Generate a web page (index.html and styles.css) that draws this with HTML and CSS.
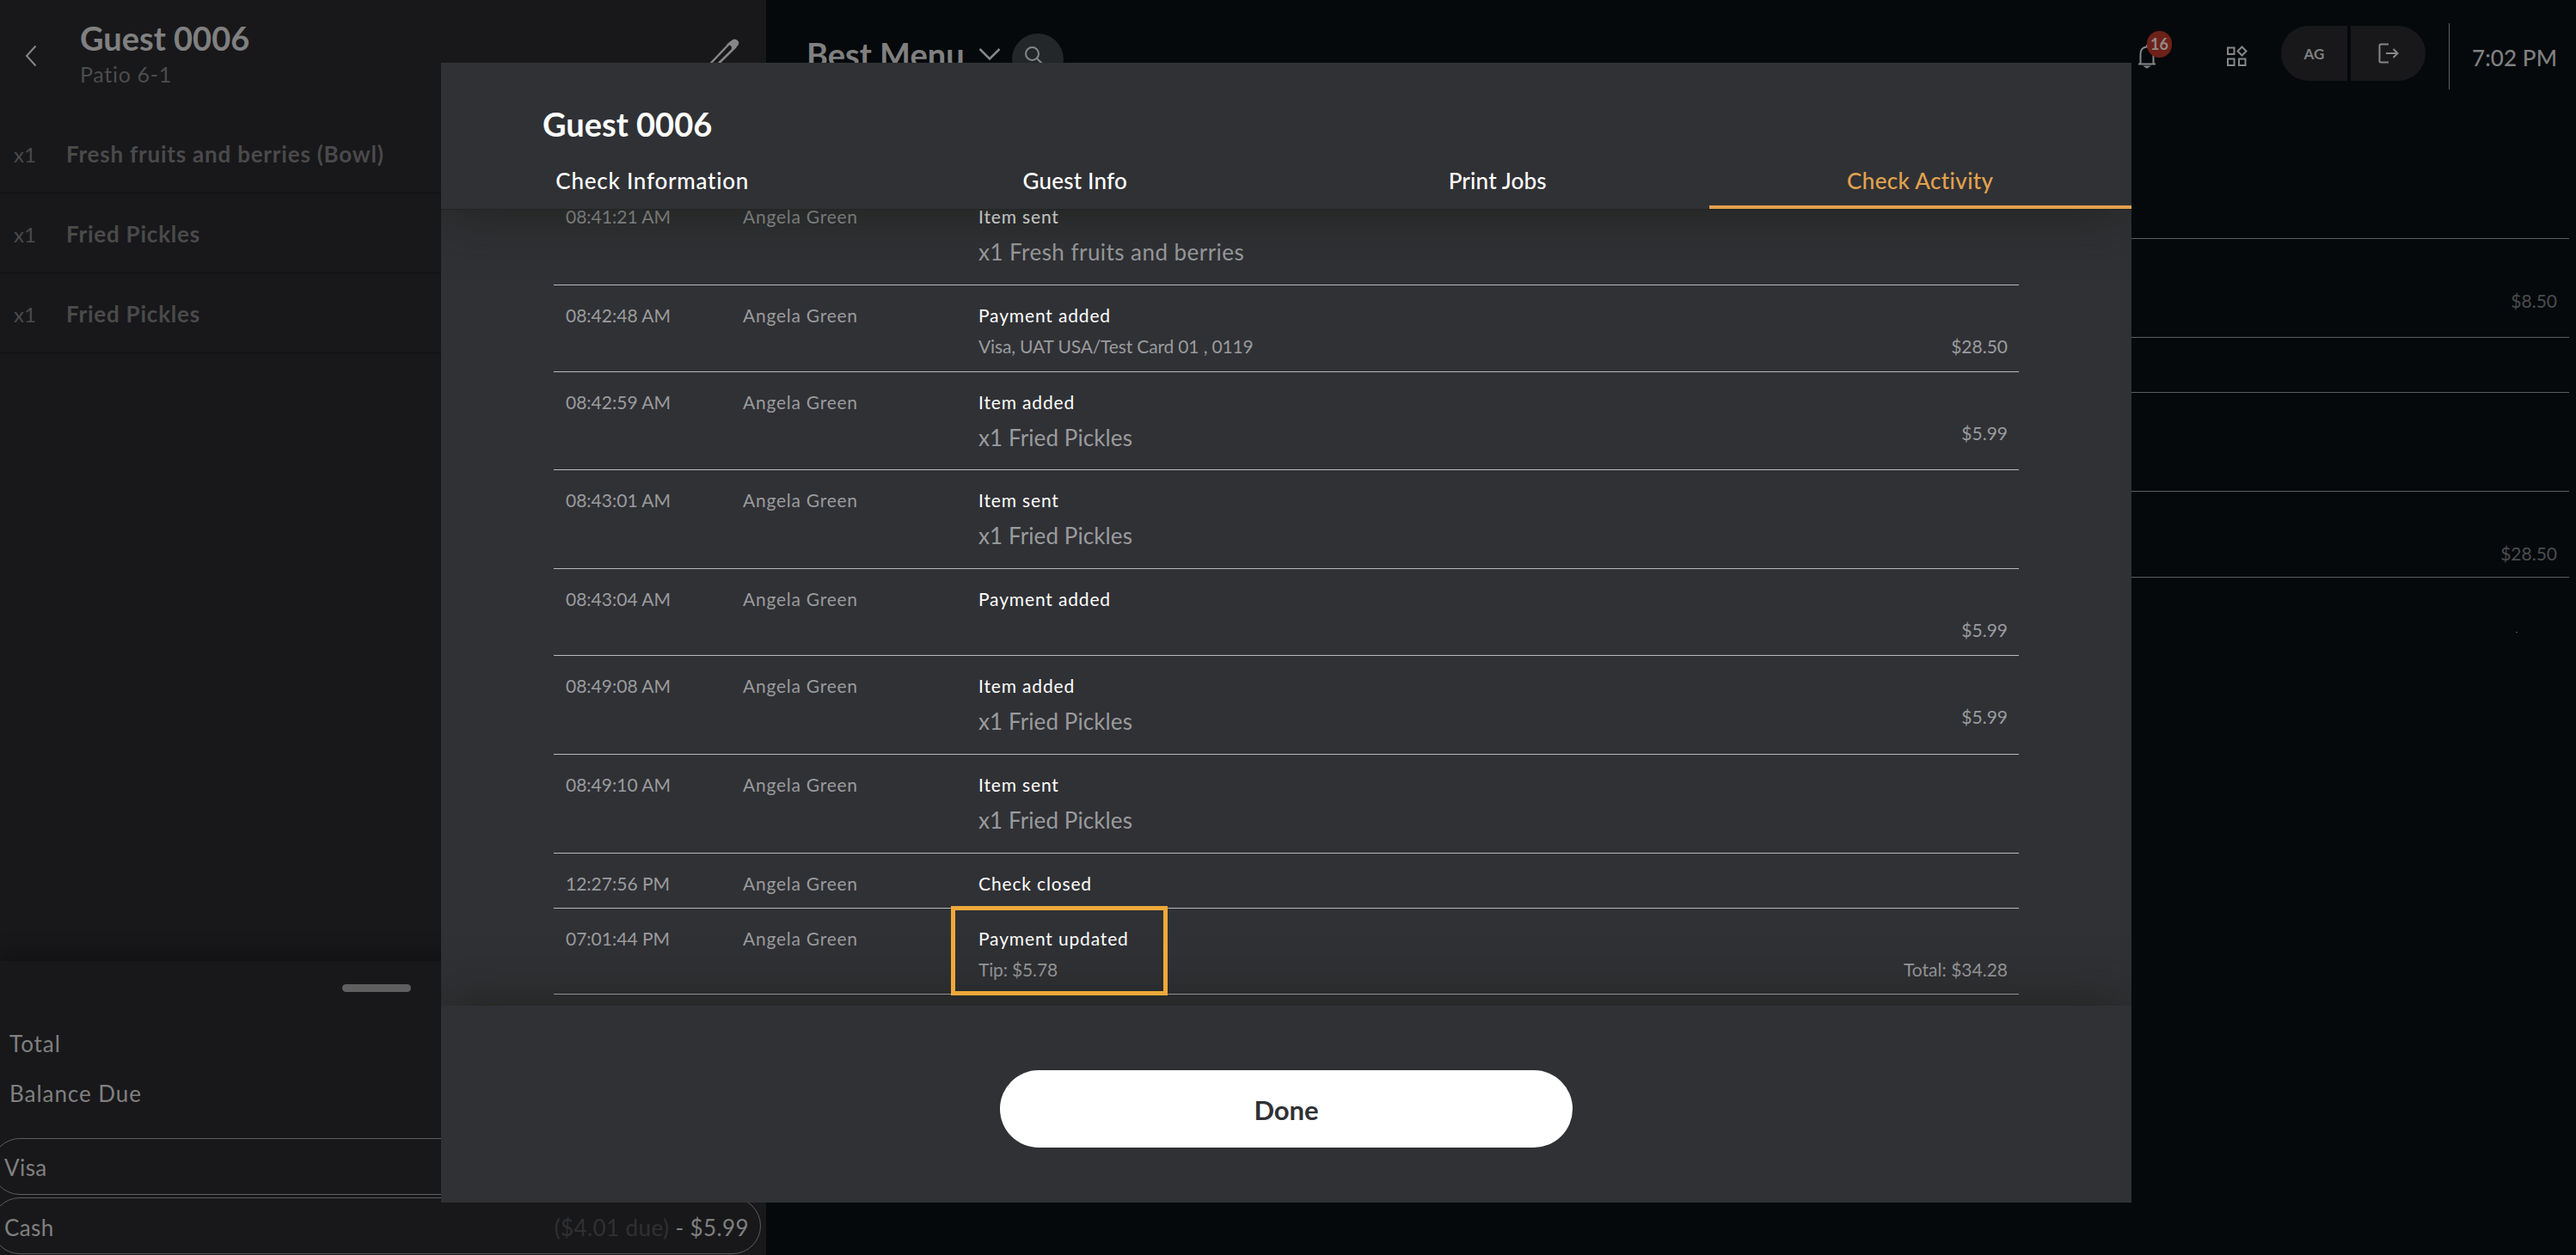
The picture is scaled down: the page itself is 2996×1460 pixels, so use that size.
FILE: index.html
```html
<!DOCTYPE html>
<html lang="en">
<head>
<meta charset="utf-8">
<title>Check Activity</title>
<link rel="stylesheet" href="styles.css">
</head>
<body>
<div class="app">
  <aside class="check">
    <header class="check-head">
      <svg class="back" width="14" height="26" viewBox="0 0 14 26"><path d="M12.500 1.500L2 13l10.500 11.500"/></svg>
      <div class="check-title">
        <div class="t-title">Guest 0006</div>
        <div class="t-table">Patio 6-1</div>
      </div>
      <svg class="pencil" width="38" height="38" viewBox="0 0 38 38"><path d="M0 32.500L27 4M9 32.500L33 9"/><path class="fill" d="M25 6l5-4q2-1 4 1t0 4.500L29 12q1-5-4-6z"/></svg>
    </header>
    <ul class="items">
      <li><span class="qty">x1</span><span class="name">Fresh fruits and berries (Bowl)</span></li>
      <li><span class="qty">x1</span><span class="name">Fried Pickles</span></li>
      <li><span class="qty">x1</span><span class="name">Fried Pickles</span></li>
    </ul>
    <section class="totals">
      <div class="handle"></div>
      <div class="sum">Total</div>
      <div class="sum">Balance Due</div>
      <div class="pay visa"><span>Visa</span></div>
      <div class="pay"><span>Cash</span><span class="paid"><span class="due">($4.01 due)</span> - $5.99</span></div>
    </section>
  </aside>
  <main class="menu">
    <header class="bar">
      <div class="menu-name">Best Menu</div>
      <svg class="caret" width="26" height="16" viewBox="0 0 26 16"><path d="M1.500 2L13 13.500 24.500 2"/></svg>
      <div class="search"><svg width="25" height="25" viewBox="0 0 25 25"><circle cx="9.500" cy="9.500" r="7.500"/><path d="M15 15l8.500 8.500"/></svg></div>
      <div class="bell">
        <svg width="20" height="28" viewBox="0 0 20 28"><path d="M0 22.500H20M2.500 22.500V11q0-8 7.500-8.500 7.500.5 7.500 8.500V22.500M10 2.500V0"/><path class="fill" d="M8.500 25.500h3l-1.500 1z"/></svg>
        <span class="badge">16</span>
      </div>
      <svg class="apps" width="24" height="24" viewBox="0 0 24 24"><path d="M1 2.500h7.500v7.500H1zM1 15.500h7.500V23H1zM14 15.500h7.500V23H14zM17.500 1.500l5 5-5 5-5-5z"/></svg>
      <div class="user"><span class="initials">AG</span><span class="logout"><svg width="24" height="24" viewBox="0 0 24 24"><path d="M12 1.500H3Q1.500 1.500 1.500 3V21Q1.500 22.500 3 22.500H12M9 12H22.500M17.500 7l5 5-5 5"/></svg></span></div>
      <div class="clock">7:02 PM</div>
    </header>
    <div class="log">
      <div class="log-row h115"><span>$8.50</span></div>
      <div class="log-row h64"></div>
      <div class="log-row h115"></div>
      <div class="log-row h100"><span>$28.50</span></div>
      <i class="speck"></i>
    </div>
  </main>
</div>

<div class="modal">
  <header class="modal-head">
    <h1>Guest 0006</h1>
    <nav class="tabs">
      <a class="tab wide">Check Information</a><a class="tab">Guest Info</a><a class="tab">Print Jobs</a><a class="tab active">Check Activity</a>
    </nav>
  </header>
  <div class="list">
    <div class="row h115 first"><span class="time">08:41:21 AM</span><span class="who">Angela Green</span><div class="what"><b>Item sent</b><p class="item long">x1 Fresh fruits and berries</p></div></div>
    <div class="row h101"><span class="time">08:42:48 AM</span><span class="who">Angela Green</span><div class="what"><b>Payment added</b><p class="note">Visa, UAT USA/Test Card 01 , 0119</p></div><span class="amt">$28.50</span></div>
    <div class="row h114"><span class="time">08:42:59 AM</span><span class="who">Angela Green</span><div class="what"><b>Item added</b><p class="item">x1 Fried Pickles</p></div><span class="amt">$5.99</span></div>
    <div class="row h115"><span class="time">08:43:01 AM</span><span class="who">Angela Green</span><div class="what"><b>Item sent</b><p class="item">x1 Fried Pickles</p></div></div>
    <div class="row h101"><span class="time">08:43:04 AM</span><span class="who">Angela Green</span><div class="what"><b>Payment added</b></div><span class="amt">$5.99</span></div>
    <div class="row h115"><span class="time">08:49:08 AM</span><span class="who">Angela Green</span><div class="what"><b>Item added</b><p class="item">x1 Fried Pickles</p></div><span class="amt">$5.99</span></div>
    <div class="row h115"><span class="time">08:49:10 AM</span><span class="who">Angela Green</span><div class="what"><b>Item sent</b><p class="item">x1 Fried Pickles</p></div></div>
    <div class="row h64"><span class="time">12:27:56 PM</span><span class="who">Angela Green</span><div class="what"><b>Check closed</b></div></div>
    <div class="row h100"><span class="time">07:01:44 PM</span><span class="who">Angela Green</span><div class="what"><b>Payment updated</b><p class="note">Tip: $5.78</p></div><span class="amt">Total: $34.28</span><i class="mark"></i></div>
  </div>
  <footer class="modal-foot"><button class="done">Done</button></footer>
</div>
</body>
</html>
```
FILE: styles.css
```css
* { box-sizing: border-box; margin: 0; padding: 0; }
body {
  width: 2996px; height: 1460px; overflow: hidden; position: relative;
  background: #05090c; color: #808080;
  font-family: Lato, "Open Sans", sans-serif; white-space: nowrap;
}
svg { display: block; flex: none; fill: none; stroke: #868686; stroke-width: 2; }
svg .fill { fill: #868686; }
.app { display: flex; height: 1460px; }

/* check panel */
.check { width: 891px; height: 1460px; background: #18181a; display: flex; flex-direction: column; overflow: hidden; }
.check-head { height: 132px; display: flex; padding: 0 30px 0 29px; flex: none; }
.back { margin-top: 52px; }
.check-title { margin-left: 50px; padding-top: 21px; flex: 1; }
.t-title { font-size: 38px; line-height: 46px; font-weight: 700; }
.t-table { font-size: 25px; line-height: 30px; margin-top: 4px; color: #4c4c4d; letter-spacing: .7px; }
.pencil { margin-top: 45px; stroke-width: 2.5; }
.items { list-style: none; }
.items li { height: 93px; border-bottom: 1px solid #101012; display: flex; align-items: center; color: #4a4a4b; padding: 1px 0 0 16px; }
.qty { width: 61px; font-size: 24px; line-height: 30px; padding-top: 2px; }
.name { font-size: 26px; line-height: 30px; font-weight: 700; letter-spacing: .78px; }
.totals { margin-top: auto; height: 342px; padding-top: 27px; box-shadow: 0 -4px 26px rgba(0,0,0,.4); flex: none; }
.handle { width: 80px; height: 9px; border-radius: 5px; background: #5f5f60; margin: 0 0 34px 398px; }
.sum { height: 58px; padding: 10px 0 0 11px; font-size: 26px; line-height: 32px; letter-spacing: .95px; }
.pay { width: 895px; height: 66px; margin: 3px 0 0 -10px; border: 1px solid #5c5c5d; border-radius: 33px; font-size: 26px; line-height: 34px; letter-spacing: .4px; display: flex; justify-content: space-between; padding: 17px 13px 0 14px; }
.pay.visa { margin-top: 20px; padding-top: 16px; }
.due { color: #303032; }

/* menu area */
.menu { flex: 1; display: flex; flex-direction: column; }
.bar { height: 277px; padding-left: 47px; display: flex; }
.menu-name { width: 200px; padding-top: 40px; font-size: 38px; line-height: 46px; font-weight: 700; }
.caret { margin-top: 55px; stroke-width: 2.5; }
.search { width: 60px; height: 60px; margin: 39px 0 0 13px; border-radius: 30px; background: #232729; padding: 14px 0 0 14px; }
.bell { position: relative; margin: 52px 0 0 1250px; width: 20px; }
.badge { position: absolute; left: 10px; top: -16px; width: 29px; height: 31px; border-radius: 15px; background: #6d2119; color: #948a88; font-size: 18px; line-height: 31px; font-weight: 700; text-align: center; }
.apps { margin: 53px 0 0 83px; }
.user { display: flex; gap: 4px; margin: 30px 0 0 39px; height: 64px; }
.initials { width: 77px; background: #18181a; border-radius: 32px 0 0 32px; font-size: 17px; font-weight: 700; line-height: 65px; text-align: center; }
.logout { width: 87px; background: #18181a; border-radius: 0 32px 32px 0; padding: 20px 0 0 32px; }
.clock { margin: 27px 0 0 27px; height: 77px; border-left: 1px solid #5c5e5f; padding: 23px 0 0 26px; font-size: 26px; line-height: 34px; font-weight: 500; letter-spacing: .1px; }
.log { margin-right: 8px; border-top: 1px solid #5c5e5f; color: #4c4c4d; font-size: 21px; }
.log-row { border-bottom: 1px solid #5c5e5f; text-align: right; padding: 59px 14px 0 0; line-height: 26px; }
.speck { display: block; width: 2px; height: 1px; background: #505253; margin: 63px 60px 0 auto; }

.h64 { height: 64px; } .h100 { height: 100px; } .h101 { height: 101px; } .h114 { height: 114px; } .h115 { height: 115px; }

/* dialog */
.modal { position: absolute; left: 513px; top: 73px; width: 1966px; height: 1326px; background: #303135; display: flex; flex-direction: column; }
.modal-head { height: 171px; flex: none; border-bottom: 1px solid #232426; color: #fff; background: #303135; box-shadow: 0 8px 56px rgba(24,28,18,.55); position: relative; z-index: 1; clip-path: inset(0 0 -80px 0); }
h1 { font-size: 38px; line-height: 46px; font-weight: 700; padding: 48px 0 0 118px; height: 118px; }
.tabs { display: flex; height: 52px; }
.tab { flex: 1; text-align: center; font-size: 26px; line-height: 38px; font-weight: 500; letter-spacing: .2px; }
.tab.wide { letter-spacing: .75px; }
.tab.active { color: #e2a24e; border-bottom: 4px solid #e2a24e; letter-spacing: .35px; }
.list { height: 926px; flex: none; padding: 0 131px; color: #9a9b9d; }
.row { position: relative; display: flex; border-bottom: 1px solid #b8b9ba; padding: 23px 13px 0 14px; font-size: 21px; line-height: 24px; }
.row.first { margin-top: -27px; }
.time { width: 206px; }
.who { width: 274px; letter-spacing: .75px; }
.what { flex: 1; }
.what b { display: block; font-weight: 400; color: #fff; letter-spacing: .85px; }
.item { font-size: 26px; line-height: 30px; margin-top: 14px; letter-spacing: .1px; }
.item.long { letter-spacing: .45px; }
.note { margin-top: 12px; letter-spacing: -.15px; }
.amt { padding-top: 36px; }
.mark { position: absolute; z-index: 2; left: 462px; top: -3px; width: 252px; height: 104px; border: 5px solid #efa93a; }
.modal-foot { flex: 1; background: #303135; position: relative; z-index: 1; box-shadow: 0 -8px 56px rgba(24,28,18,.55); clip-path: inset(-80px 0 0 0); padding-top: 75px; text-align: center; }
.done { width: 666px; height: 90px; border: 0; border-radius: 45px; background: #fff; color: #303135; font: 700 31px Lato, sans-serif; padding-top: 1px; }
```
